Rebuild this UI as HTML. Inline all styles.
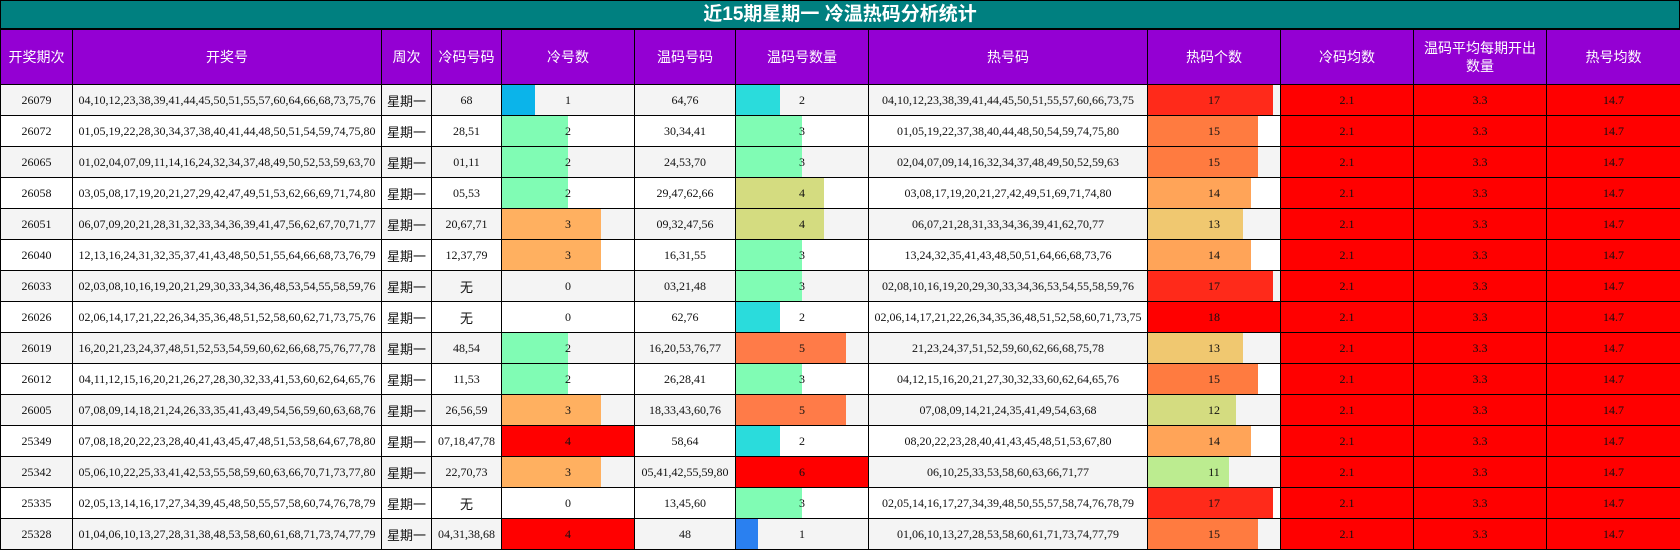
<!DOCTYPE html>
<html><head><meta charset="utf-8"><style>
*{margin:0;padding:0;box-sizing:border-box}
body{width:1680px;height:550px;background:#fff;overflow:hidden;font-family:"Liberation Serif",serif}
.title{position:absolute;left:0;top:0;width:1680px;height:30px;background:#008080;border:1px solid #000;border-bottom:2px solid #000;color:#fff;font:bold 19px "Liberation Sans","Noto Sans CJK SC",sans-serif;text-align:center;line-height:28px}
table{position:absolute;left:0;top:29px;border-collapse:collapse;table-layout:fixed;width:1680px}
td,th{border:1px solid #000;text-align:center;font-size:12px;color:#111;height:31px;position:relative;white-space:nowrap;overflow:hidden}
th{background:#9400d3;color:#fff;font:14px "Liberation Sans","Noto Sans CJK SC",sans-serif;height:55px;line-height:18px;font-weight:normal}
tr.g td{background:#f4f4f4}
td.r{background:#ff0000 !important}
.b{position:absolute;left:0;top:0;bottom:0}
.t{position:relative}
.cj{font-family:"Liberation Sans","Noto Sans CJK SC",sans-serif;font-size:13px}
</style></head><body>
<div class="title">近15期星期一 冷温热码分析统计</div>
<table>
<colgroup><col style="width:72px"><col style="width:309px"><col style="width:50px"><col style="width:70px"><col style="width:133px"><col style="width:101px"><col style="width:133px"><col style="width:279px"><col style="width:133px"><col style="width:133px"><col style="width:133px"><col style="width:134px"></colgroup>
<tr><th>开奖期次</th><th>开奖号</th><th>周次</th><th>冷码号码</th><th>冷号数</th><th>温码号码</th><th>温码号数量</th><th>热号码</th><th>热码个数</th><th>冷码均数</th><th>温码平均每期开出<br>数量</th><th>热号均数</th></tr>
<tbody id="tb"></tbody>
</table>
<script>
var d=[
["26079","04,10,12,23,38,39,41,44,45,50,51,55,57,60,64,66,68,73,75,76","68",1,"64,76",2,"04,10,12,23,38,39,41,44,45,50,51,55,57,60,66,73,75",17],
["26072","01,05,19,22,28,30,34,37,38,40,41,44,48,50,51,54,59,74,75,80","28,51",2,"30,34,41",3,"01,05,19,22,37,38,40,44,48,50,54,59,74,75,80",15],
["26065","01,02,04,07,09,11,14,16,24,32,34,37,48,49,50,52,53,59,63,70","01,11",2,"24,53,70",3,"02,04,07,09,14,16,32,34,37,48,49,50,52,59,63",15],
["26058","03,05,08,17,19,20,21,27,29,42,47,49,51,53,62,66,69,71,74,80","05,53",2,"29,47,62,66",4,"03,08,17,19,20,21,27,42,49,51,69,71,74,80",14],
["26051","06,07,09,20,21,28,31,32,33,34,36,39,41,47,56,62,67,70,71,77","20,67,71",3,"09,32,47,56",4,"06,07,21,28,31,33,34,36,39,41,62,70,77",13],
["26040","12,13,16,24,31,32,35,37,41,43,48,50,51,55,64,66,68,73,76,79","12,37,79",3,"16,31,55",3,"13,24,32,35,41,43,48,50,51,64,66,68,73,76",14],
["26033","02,03,08,10,16,19,20,21,29,30,33,34,36,48,53,54,55,58,59,76","无",0,"03,21,48",3,"02,08,10,16,19,20,29,30,33,34,36,53,54,55,58,59,76",17],
["26026","02,06,14,17,21,22,26,34,35,36,48,51,52,58,60,62,71,73,75,76","无",0,"62,76",2,"02,06,14,17,21,22,26,34,35,36,48,51,52,58,60,71,73,75",18],
["26019","16,20,21,23,24,37,48,51,52,53,54,59,60,62,66,68,75,76,77,78","48,54",2,"16,20,53,76,77",5,"21,23,24,37,51,52,59,60,62,66,68,75,78",13],
["26012","04,11,12,15,16,20,21,26,27,28,30,32,33,41,53,60,62,64,65,76","11,53",2,"26,28,41",3,"04,12,15,16,20,21,27,30,32,33,60,62,64,65,76",15],
["26005","07,08,09,14,18,21,24,26,33,35,41,43,49,54,56,59,60,63,68,76","26,56,59",3,"18,33,43,60,76",5,"07,08,09,14,21,24,35,41,49,54,63,68",12],
["25349","07,08,18,20,22,23,28,40,41,43,45,47,48,51,53,58,64,67,78,80","07,18,47,78",4,"58,64",2,"08,20,22,23,28,40,41,43,45,48,51,53,67,80",14],
["25342","05,06,10,22,25,33,41,42,53,55,58,59,60,63,66,70,71,73,77,80","22,70,73",3,"05,41,42,55,59,80",6,"06,10,25,33,53,58,60,63,66,71,77",11],
["25335","02,05,13,14,16,17,27,34,39,45,48,50,55,57,58,60,74,76,78,79","无",0,"13,45,60",3,"02,05,14,16,17,27,34,39,48,50,55,57,58,74,76,78,79",17],
["25328","01,04,06,10,13,27,28,31,38,48,53,58,60,61,68,71,73,74,77,79","04,31,38,68",4,"48",1,"01,06,10,13,27,28,53,58,60,61,71,73,74,77,79",15]];
var cc={0:"transparent",1:"#0bb4ea",2:"#80fcb4",3:"#ffb060",4:"#ff0000"};
var wc={1:"#2a80f0",2:"#2adcdc",3:"#80fcb4",4:"#d4dc80",5:"#ff7b48",6:"#ff0000"};
var hc={11:"#bcec90",12:"#d4dc80",13:"#f0c870",14:"#ffa458",15:"#ff7b40",17:"#ff2a1a",18:"#ff0000"};
function bar(v,m,c){return '<div class="b" style="width:'+(v/m*100)+'%;background:'+c+'"></div><span class="t">'+v+'</span>';}
var h="";
d.forEach(function(r,i){
h+='<tr class="'+(i%2==0?'g':'')+'"><td>'+r[0]+'</td><td>'+r[1]+'</td><td class="cj">星期一</td><td'+(r[2]=="无"?' class="cj"':'')+'>'+r[2]+'</td><td>'+bar(r[3],4,cc[r[3]])+'</td><td>'+r[4]+'</td><td>'+bar(r[5],6,wc[r[5]])+'</td><td>'+r[6]+'</td><td>'+bar(r[7],18,hc[r[7]])+'</td><td class="r">2.1</td><td class="r">3.3</td><td class="r">14.7</td></tr>';
});
document.getElementById("tb").innerHTML=h;
</script>
</body></html>
